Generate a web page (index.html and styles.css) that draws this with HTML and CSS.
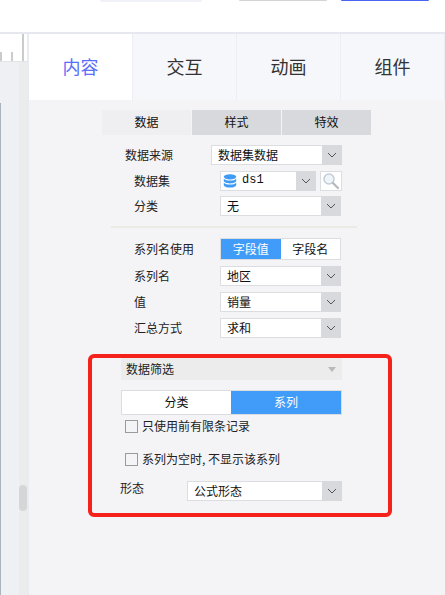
FILE: index.html
```html
<!DOCTYPE html>
<html lang="zh">
<head>
    <meta charset="UTF-8">
    <title>数据筛选</title>
    <link rel="stylesheet" href="styles.css">
</head>
<body>
    <div class="topbar">
        <span class="top-btn top-a"></span>
        <span class="top-btn top-b"></span>
        <span class="top-btn top-c"></span>
    </div>
    <div class="main">
        <div class="rail">
            <div class="ruler"><span class="tick-a"></span><span class="tick-b"></span><span class="tick-c"></span></div>
            <div class="rail-body">
                <span class="edge"></span>
                <div class="track"><span class="thumb"></span></div>
            </div>
        </div>
        <div class="panel">
            <div class="tabs">
                <div class="tab active">内容</div>
                <div class="tab">交互</div>
                <div class="tab">动画</div>
                <div class="tab">组件</div>
            </div>
            <div class="subtabs">
                <div class="subtab active">数据</div>
                <div class="subtab">样式</div>
                <div class="subtab">特效</div>
            </div>

            <div class="row row-source">
                <label class="lbl">数据来源</label>
                <div class="select sel-source"><span class="val">数据集数据</span><span class="arrow"><svg width="10" height="6" viewBox="0 0 10 6"><path d="M1 1l4 4 4-4" fill="none" stroke="#555" stroke-width="1"/></svg></span></div>
            </div>
            <div class="row row-inner">
                <label class="lbl">数据集</label>
                <div class="select sel-ds">
                    <svg class="db" width="14" height="14" viewBox="0 0 14 14"><ellipse cx="7" cy="2.8" rx="6.2" ry="2.6" fill="#3f9bf5"/><path d="M.8 4.4c1 1.6 3.4 2.2 6.2 2.2s5.200-.6 6.200-2.200v2.400c0 1.500-2.800 2.600-6.200 2.600S.8 8.300.8 6.800z" fill="#3f9bf5"/><path d="M.8 8.400c1 1.600 3.400 2.200 6.200 2.200s5.200-.6 6.200-2.200v2.600c0 1.500-2.800 2.600-6.200 2.600S.8 12.500.8 11z" fill="#3f9bf5"/></svg>
                    <span class="val val-ds">ds1</span>
                    <span class="arrow"><svg width="10" height="6" viewBox="0 0 10 6"><path d="M1 1l4 4 4-4" fill="none" stroke="#555" stroke-width="1"/></svg></span>
                </div>
                <div class="search"><svg width="18" height="18" viewBox="0 0 18 18"><circle cx="7" cy="7" r="5" fill="#eef5fb" stroke="#c3cdd6" stroke-width="1.500"/><path d="M11 11l5 5" stroke="#b5b8bc" stroke-width="2.200" stroke-linecap="round"/></svg></div>
            </div>
            <div class="row row-inner row-tight">
                <label class="lbl">分类</label>
                <div class="select sel-wide"><span class="val">无</span><span class="arrow"><svg width="10" height="6" viewBox="0 0 10 6"><path d="M1 1l4 4 4-4" fill="none" stroke="#555" stroke-width="1"/></svg></span></div>
            </div>

            <div class="divider"></div>

            <div class="row row-inner row-name">
                <label class="lbl">系列名使用</label>
                <div class="toggle toggle-name">
                    <span class="opt on">字段值</span>
                    <span class="opt">字段名</span>
                </div>
            </div>
            <div class="row row-inner">
                <label class="lbl">系列名</label>
                <div class="select sel-wide"><span class="val">地区</span><span class="arrow"><svg width="10" height="6" viewBox="0 0 10 6"><path d="M1 1l4 4 4-4" fill="none" stroke="#555" stroke-width="1"/></svg></span></div>
            </div>
            <div class="row row-inner">
                <label class="lbl">值</label>
                <div class="select sel-wide"><span class="val">销量</span><span class="arrow"><svg width="10" height="6" viewBox="0 0 10 6"><path d="M1 1l4 4 4-4" fill="none" stroke="#555" stroke-width="1"/></svg></span></div>
            </div>
            <div class="row row-inner">
                <label class="lbl">汇总方式</label>
                <div class="select sel-wide"><span class="val">求和</span><span class="arrow"><svg width="10" height="6" viewBox="0 0 10 6"><path d="M1 1l4 4 4-4" fill="none" stroke="#555" stroke-width="1"/></svg></span></div>
            </div>

            <div class="filter">
                <div class="filter-head"><span class="head-text">数据筛选</span><span class="caret"></span></div>
                <div class="toggle toggle-filter">
                    <span class="opt">分类</span>
                    <span class="opt on">系列</span>
                </div>
                <label class="check check-first"><span class="box"></span><span class="check-text">只使用前有限条记录</span></label>
                <label class="check check-second"><span class="box"></span><span class="check-text">系列为空时, 不显示该系列</span></label>
                <div class="form-row">
                    <span class="lbl-form">形态</span>
                    <div class="select sel-form"><span class="val">公式形态</span><span class="arrow"><svg width="10" height="6" viewBox="0 0 10 6"><path d="M1 1l4 4 4-4" fill="none" stroke="#555" stroke-width="1"/></svg></span></div>
                </div>
            </div>
        </div>
    </div>
</body>
</html>
```

FILE: styles.css
```css
* {
    box-sizing: border-box;
}
html, body {
    margin: 0;
    height: 100%;
}
body {
    width: 445px;
    height: 595px;
    overflow: hidden;
    background: #f4f4f7;
    font-family: "Noto Sans CJK SC", "Liberation Sans", sans-serif;
    font-size: 12px;
    color: #222;
    display: flex;
    flex-direction: column;
}
.topbar {
    height: 34px;
    flex: none;
    background: #fff;
    border-bottom: 2px solid #e6e7ef;
    display: flex;
    align-items: flex-start;
}
.top-btn {
    display: block;
    border-radius: 0 0 3px 3px;
}
.top-a {
    width: 102px;
    height: 2px;
    margin-left: 100px;
    background: #f0f1f6;
}
.top-b {
    width: 88px;
    height: 1px;
    margin-left: 37px;
    background: #d4d4d4;
}
.top-c {
    width: 88px;
    height: 1px;
    margin-left: 14px;
    background: #4a63f5;
}
.main {
    flex: 1;
    display: flex;
    min-height: 0;
}
.rail {
    width: 29px;
    flex: none;
    background: #eef0f4;
    border-right: 2px solid #e8ebf2;
    display: flex;
    flex-direction: column;
}
.ruler {
    height: 28px;
    background: #fff;
    border-bottom: 1px solid #e3e4e8;
    display: flex;
    align-items: flex-end;
}
.ruler span {
    display: block;
    width: 2px;
    background: #cbcbcb;
}
.tick-a {
    height: 9px;
}
.ruler .tick-b {
    height: 9px;
    margin-left: 9px;
}
.ruler .tick-c {
    height: 27px;
    margin-left: 9px;
}
.rail-body {
    flex: 1;
    display: flex;
    min-height: 0;
}
.edge {
    width: 1px;
    margin-top: 41px;
    background: #a9b4bf;
}
.track {
    flex: 1;
    margin-left: 18px;
    background: #ececec;
    padding-top: 423px;
}
.thumb {
    display: block;
    width: 8px;
    height: 26px;
    border-radius: 4px;
    background: #d6d6d8;
}
.panel {
    flex: 1;
    min-width: 0;
}
.tabs {
    display: flex;
    height: 66px;
}
.tab {
    width: 104px;
    padding-bottom: 2px;
    background: #f5f7fb;
    border-right: 1px solid #eceef3;
    font-size: 18px;
    color: #333;
    display: flex;
    align-items: center;
    justify-content: center;
}
.tab.active {
    background: #fff;
    color: #5a6ef8;
}
.subtabs {
    display: flex;
    gap: 1px;
    margin: 10px 0 0 73px;
    width: 269px;
}
.subtab {
    flex: 1;
    height: 25px;
    padding-bottom: 2px;
    background: #d8d9dc;
    color: #111;
    display: flex;
    align-items: center;
    justify-content: center;
}
.subtab.active {
    background: #efeff1;
}
.row {
    display: flex;
    align-items: center;
    height: 20px;
    margin-top: 6px;
}
.row-source {
    margin-top: 10px;
    padding-left: 96px;
}
.row-inner {
    padding-left: 105px;
}
.row-tight {
    margin-top: 5px;
}
.row-name {
    height: 22px;
    margin-top: 10px;
}
.lbl {
    color: #222;
    width: 86px;
    padding-bottom: 2px;
    flex: none;
}
.select {
    display: flex;
    align-items: center;
    height: 20px;
    background: #fff;
    border: 1px solid #dcdde1;
    color: #111;
}
.val {
    flex: 1;
    padding: 0 0 2px 6px;
}
.arrow {
    width: 20px;
    height: 20px;
    margin: -1px -1px -1px 0;
    flex: none;
    background: #d8d9dc;
    display: flex;
    align-items: center;
    justify-content: center;
}
.sel-source {
    width: 131px;
}
.sel-wide {
    width: 121px;
}
.sel-ds {
    width: 96px;
}
.db {
    margin-left: 2px;
    flex: none;
}
.val-ds {
    padding-left: 5px;
    font-family: "Liberation Mono", monospace;
    font-size: 12px;
}
.search {
    width: 22px;
    height: 20px;
    margin-left: 4px;
    background: #fff;
    border: 1px solid #dcdde1;
    display: flex;
    align-items: center;
    justify-content: center;
}
.divider {
    height: 2px;
    margin: 10px 0 0 82px;
    width: 246px;
    background: #ebebe6;
}
.toggle {
    display: flex;
    background: #fff;
    border: 1px solid #dcdde1;
}
.opt {
    padding-bottom: 2px;
    display: flex;
    align-items: center;
    justify-content: center;
    color: #111;
}
.opt.on {
    background: #409cf8;
    color: #fff;
}
.toggle-name {
    width: 121px;
    height: 22px;
}
.toggle-name .opt {
    flex: 1;
}
.filter {
    margin: 16px 0 0 59px;
    width: 304px;
    height: 163px;
    position: relative;
    padding: 4px 0 0 33px;
}
.filter::before {
    content: "";
    position: absolute;
    inset: 0;
    border: 4px solid #f5211b;
    border-radius: 6px;
    pointer-events: none;
}
.filter-head {
    width: 221px;
    height: 22px;
    background: #ececec;
    padding: 0 6px 0 5px;
    display: flex;
    align-items: center;
    justify-content: space-between;
}
.head-text {
    padding-bottom: 2px;
}
.caret {
    width: 0;
    height: 0;
    border: 4px solid transparent;
    border-top: 5px solid #b9b9b9;
    border-bottom: 0;
}
.toggle-filter {
    width: 221px;
    height: 25px;
    margin-top: 10px;
}
.toggle-filter .opt {
    width: 109px;
}
.toggle-filter .opt.on {
    flex: 1;
}
.check {
    display: flex;
    align-items: center;
    gap: 4px;
    margin-left: 4px;
    height: 19px;
}
.check-text {
    padding-bottom: 2px;
}
.check-first {
    margin-top: 2px;
}
.check-second {
    margin-top: 14px;
}
.box {
    width: 13px;
    height: 13px;
    background: #f4f4f7;
    border: 1px solid #9a9a9a;
}
.form-row {
    display: flex;
    align-items: center;
    margin-top: 12px;
}
.lbl-form {
    width: 67px;
    margin-left: -1px;
    padding-bottom: 2px;
    position: relative;
    top: -3px;
}
.sel-form {
    width: 155px;
}
```
